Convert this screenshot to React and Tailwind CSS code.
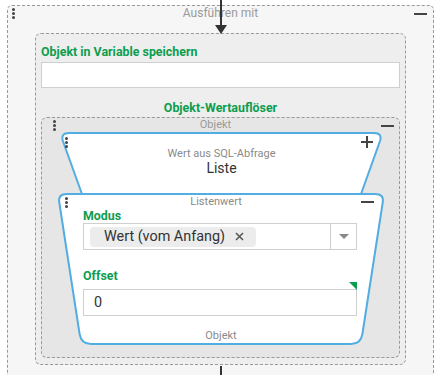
import React from "react";

const green = "text-[#0d9d4f]";

const Dots = () => (
  <div className="flex flex-col gap-[1px]">
    <span className="w-[3px] h-[3px] rounded-full bg-[#444]" />
    <span className="w-[3px] h-[3px] rounded-full bg-[#444]" />
    <span className="w-[3px] h-[3px] rounded-full bg-[#444]" />
  </div>
);

const Minus = () => <span className="block w-[13px] h-[2px] bg-[#444]" />;

const Plus = () => (
  <svg width="12" height="12" viewBox="0 0 12 12">
    <path d="M6 0v12M0 6h12" stroke="#444" strokeWidth="2" />
  </svg>
);

export default function App() {
  return (
    <div
      className="relative w-[443px] h-[375px] overflow-hidden bg-white pt-[5px] pl-[7px]"
      style={{ fontFamily: "Roboto, 'Liberation Sans', sans-serif" }}
    >
      {/* Ausführen mit */}
      <div className="w-[427px] h-[420px] border border-dashed border-[#999] rounded-[5px] bg-[#f6f6f6]">
        <div className="relative h-[27px]">
          <div className="absolute left-[4px] top-[2px]">
            <Dots />
          </div>
          <p className="pt-[1px] text-center text-[12px] leading-[13px] text-[#9a9a9a]">
            Ausführen mit
          </p>
          <div className="absolute right-[6px] top-[7px]">
            <Minus />
          </div>
        </div>

        {/* Objekt in Variable speichern */}
        <div className="ml-[27px] w-[371px] border border-dashed border-[#999] rounded-[6px] bg-[#eeeeee] px-[5px] pt-[10px] pb-[6px]">
          <p className={`text-[12.4px] leading-[16px] font-bold ${green}`}>
            Objekt in Variable speichern
          </p>
          <div className="mt-[2px] h-[26px] w-[359px] border border-[#cfcfcf] bg-white" />
          <p className={`mt-[12px] text-center text-[12.4px] leading-[16px] font-bold ${green}`}>
            Objekt-Wertauflöser
          </p>

          {/* Objekt */}
          <div className="mt-[1px] w-[359px] border border-dashed border-[#999] rounded-[6px] bg-[#e6e6e6] pb-[12px]">
            <div className="relative h-[14px]">
              <div className="absolute left-[11px] top-[2px]">
                <Dots />
              </div>
              <p className="pr-[10px] text-center text-[11px] leading-[13px] text-[#9a9a9a]">Objekt</p>
              <div className="absolute right-[5px] top-[7px]">
                <Minus />
              </div>
            </div>

            {/* Wert aus SQL-Abfrage */}
            <div className="relative ml-[17px] w-[325px] h-[61px]">
              <svg className="absolute left-0 top-0" width="325" height="67" viewBox="0 0 325 67">
                <path
                  d="M24.4 66 L3.9 9 Q1.5 1 10 1 L315 1 Q323.5 1 321 9 L300.6 66 Z"
                  fill="#fff"
                  stroke="#52ade3"
                  strokeWidth="2"
                />
              </svg>
              <div className="relative h-full">
                <div className="absolute left-[6px] top-[5px]">
                  <Dots />
                </div>
                <div className="absolute right-[11px] top-[4px]">
                  <Plus />
                </div>
                <p className="pt-[15px] text-center text-[11px] leading-[13px] text-[#8a8a8a]">
                  Wert aus SQL-Abfrage
                </p>
                <p className="text-center text-[14px] leading-[17px] text-[#333]">Liste</p>
              </div>
            </div>

            {/* Listenwert */}
            <div className="relative ml-[15px] w-[328px] h-[152px]">
              <svg className="absolute left-0 top-0" width="328" height="152" viewBox="0 0 328 152">
                <path
                  d="M10 1 L318 1 Q327 1 325.8 9 L305.4 141 Q303.8 151 294 151 L34 151 Q24.2 151 22.6 141 L2.2 9 Q1 1 10 1 Z"
                  fill="#fff"
                  stroke="#52ade3"
                  strokeWidth="2"
                />
              </svg>
              <div className="relative h-full">
                <div className="absolute left-[8px] top-[4px]">
                  <Dots />
                </div>
                <div className="absolute right-[11px] top-[8px]">
                  <Minus />
                </div>
                <p className="pt-[2px] pr-[10px] text-center text-[11px] leading-[13px] text-[#8a8a8a]">
                  Listenwert
                </p>
                <div className="pl-[26px]">
                  <p className={`text-[12.4px] leading-[15px] font-bold ${green}`}>Modus</p>
                  <div className="flex h-[27px] w-[274px] border border-[#cfcfcf] bg-white">
                    <div className="flex flex-1 items-center pl-[6px]">
                      <div className="flex h-[20px] w-[166px] items-center rounded-[4px] bg-[#ececec] pl-[14px]">
                        <span className="text-[14.4px] leading-[17px] text-[#333]">
                          Wert (vom Anfang)
                        </span>
                        <svg className="ml-[10px]" width="9" height="9" viewBox="0 0 9 9">
                          <path d="M1 1L8 8M8 1L1 8" stroke="#555" strokeWidth="1.5" />
                        </svg>
                      </div>
                    </div>
                    <div className="flex w-[26px] items-center justify-center border-l border-[#cfcfcf]">
                      <svg width="10" height="5" viewBox="0 0 10 5">
                        <path d="M0 0h10L5 5z" fill="#888" />
                      </svg>
                    </div>
                  </div>
                  <p className={`mt-[18px] text-[12.4px] leading-[15px] font-bold ${green}`}>Offset</p>
                  <div className="relative mt-[6px] flex h-[27px] w-[274px] items-center border border-[#cfcfcf] bg-white pl-[10px]">
                    <span className="text-[14.4px] leading-[17px] text-[#333]">0</span>
                    <svg className="absolute right-[-1px] top-[-8px]" width="8" height="8" viewBox="0 0 8 8">
                      <path d="M0 0h8v8z" fill="#0d9d4f" />
                    </svg>
                  </div>
                </div>
                <p className="mt-[13px] text-center text-[11px] leading-[13px] text-[#8a8a8a]">Objekt</p>
              </div>
            </div>
          </div>
        </div>
      </div>

      {/* connection arrows */}
      <div className="absolute left-[220px] top-0 h-[27px] w-[2px] bg-[#333]" />
      <svg className="absolute left-[215px] top-[25px]" width="12" height="9" viewBox="0 0 12 9">
        <path d="M0 0h12L6 9z" fill="#333" />
      </svg>
      <div className="absolute left-[220px] top-[366px] h-[12px] w-[2px] bg-[#333]" />
    </div>
  );
}
